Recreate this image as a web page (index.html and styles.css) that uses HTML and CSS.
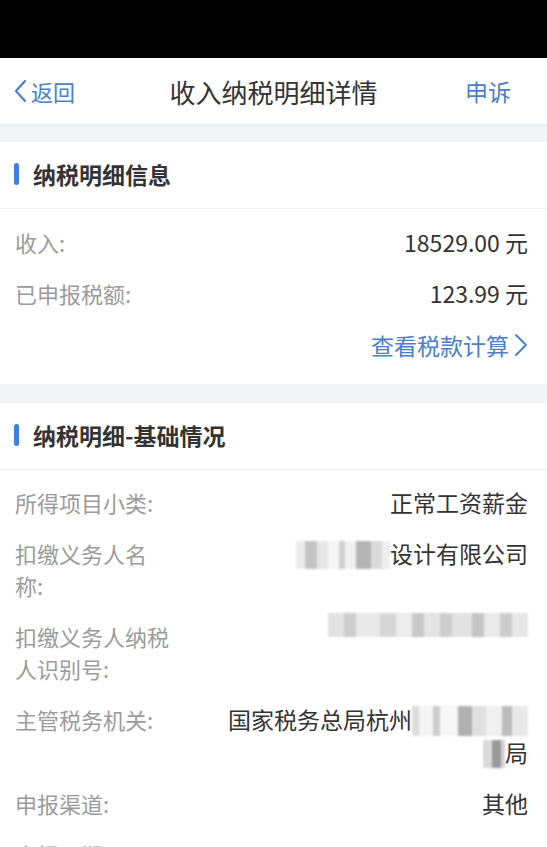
FILE: index.html
```html
<!DOCTYPE html>
<html lang="zh-CN">
<head>
    <meta charset="UTF-8">
    <meta name="viewport" content="width=device-width, initial-scale=1.0">
    <title>收入纳税明细详情</title>
    <link rel="stylesheet" href="styles.css">
</head>
<body>

<div class="status-bar"></div>

<div class="nav">
    <a class="nav-back">
        <svg width="17" height="24" viewBox="0 0 17 24"><polyline points="13,2 4,12 13,22" fill="none" stroke="#4a80c9" stroke-width="2.2" stroke-linecap="round" stroke-linejoin="round"/></svg>
        返回
    </a>
    <div class="nav-title">收入纳税明细详情</div>
    <a class="nav-action">申诉</a>
</div>

<div class="card">
    <div class="card-head"><span class="bar"></span>纳税明细信息</div>
    <div class="list">
        <div class="row">
            <div class="label">收入:</div>
            <div class="value">18529.00 元</div>
        </div>
        <div class="row">
            <div class="label">已申报税额:</div>
            <div class="value">123.99 元</div>
        </div>
        <div class="row link-row">
            <a class="link">查看税款计算
                <svg width="15" height="26" viewBox="0 0 15 26"><polyline points="3,3 13,13 3,23" fill="none" stroke="#4a80c9" stroke-width="1.8" stroke-linecap="round" stroke-linejoin="round"/></svg>
            </a>
        </div>
    </div>
</div>

<div class="card">
    <div class="card-head"><span class="bar"></span>纳税明细-基础情况</div>
    <div class="list">
        <div class="row">
            <div class="label">所得项目小类:</div>
            <div class="value">正常工资薪金</div>
        </div>
        <div class="row">
            <div class="label">扣缴义务人名称:</div>
            <div class="value"><span class="mosaic m-name"></span>设计有限公司</div>
        </div>
        <div class="row">
            <div class="label">扣缴义务人纳税人识别号:</div>
            <div class="value"><span class="mosaic m-id"></span></div>
        </div>
        <div class="row">
            <div class="label">主管税务机关:</div>
            <div class="value">国家税务总局杭州<span class="mosaic m-org"></span><br><span class="mosaic m-small"></span>局</div>
        </div>
        <div class="row">
            <div class="label">申报渠道:</div>
            <div class="value">其他</div>
        </div>
        <div class="row">
            <div class="label">申报日期:</div>
            <div class="value">2025-05-31</div>
        </div>
    </div>
</div>

</body>
</html>
```

FILE: styles.css
```css
body {
    margin: 0;
    background: #f3f4f7;
    font-family: "Noto Sans CJK SC", "Noto Sans", sans-serif;
    color: #333;
}

a { text-decoration: none; }

.status-bar {
    height: 58px;
    background: #000;
}

/* barra de navegacion */
.nav {
    height: 66px;
    background: #fff;
    display: grid;
    grid-template-columns: 1fr auto 1fr;
    align-items: center;
    box-shadow: 0 1px 3px rgba(0, 0, 0, 0.05);
}

.nav-back {
    display: flex;
    align-items: center;
    gap: 2px;
    padding-left: 12px;
    color: #4a80c9;
    font-size: 22px;
}

.nav-title {
    font-size: 26px;
    color: #333;
}

.nav-action {
    justify-self: end;
    padding-right: 36px;
    color: #4a80c9;
    font-size: 23px;
}

/* tarjetas */
.card {
    background: #fff;
    margin-top: 18px;
}

.card + .card { margin-top: 19px; }

.card-head {
    height: 67px;
    box-sizing: border-box;
    padding-bottom: 2px;
    display: flex;
    align-items: center;
    padding-left: 14px;
    font-size: 23px;
    font-weight: bold;
    color: #333;
    border-bottom: 1px solid #f0f0f0;
}

.bar {
    width: 5px;
    height: 22px;
    border-radius: 3px;
    background: #3f7ee8;
    margin-right: 14px;
}

.list {
    padding: 7px 19px 13px 15px;
}

.row {
    display: flex;
    padding: 9.5px 0;
    font-size: 22px;
    line-height: 32px;
}

.label {
    flex: 0 0 156px;
    color: #9b9b9b;
}

.value {
    flex: 1;
    padding-left: 44px;
    text-align: right;
    color: #333;
    font-size: 23px;
}

.link-row {
    justify-content: flex-end;
    padding-top: 11px;
}

.link {
    display: flex;
    align-items: center;
    gap: 4px;
    color: #4a80c9;
    font-size: 23px;
}

/* zonas pixeladas */
.mosaic {
    display: inline-block;
    vertical-align: middle;
    filter: blur(1.2px);
}

.m-name {
    width: 94px;
    height: 28px;
    margin-top: -4px;
    background: linear-gradient(90deg, #ececec 0 10%, #c4c4c4 10% 22%, #e6e6e6 22% 34%, #f6f6f6 34% 46%, #cfcfcf 46% 52%, #f0f0f0 52% 64%, #b4b4b4 64% 80%, #dadada 80% 92%, #efefef 92% 100%);
}

.m-id {
    width: 200px;
    height: 24px;
    margin-top: -30px;
    background: linear-gradient(90deg, #e2e2e2 0 8%, #cdcdcd 8% 14%, #e8e8e8 14% 26%, #d6d6d6 26% 34%, #ececec 34% 42%, #c8c8c8 42% 48%, #e4e4e4 48% 56%, #cecece 56% 62%, #e2e2e2 62% 72%, #c4c4c4 72% 78%, #eaeaea 78% 86%, #cccccc 86% 92%, #e6e6e6 92% 100%);
}

.m-org {
    width: 116px;
    height: 30px;
    margin-top: -4px;
    background: linear-gradient(90deg, #dcdcdc 0 6%, #f4f4f4 6% 18%, #cdcdcd 18% 24%, #f6f6f6 24% 40%, #b0b0b0 40% 52%, #e0e0e0 52% 64%, #f0f0f0 64% 78%, #bcbcbc 78% 86%, #e8e8e8 86% 100%);
}

.m-small {
    width: 22px;
    height: 28px;
    margin-top: -4px;
    background: linear-gradient(90deg, #dadada 0 40%, #999999 40% 80%, #d4d4d4 80% 100%);
}
```
